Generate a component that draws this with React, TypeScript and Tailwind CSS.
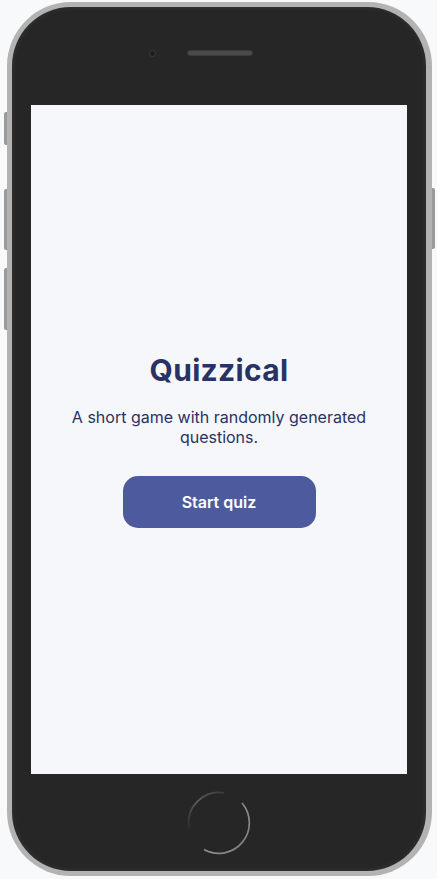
import React from "react";

export default function App() {
  return (
    <div className="w-[437px] h-[879px] bg-[#f8f9fa] overflow-hidden pt-[2px] pl-[7px]">
      <div className="relative w-[425px] h-[874px] rounded-[64px] bg-[#b3b3b3] p-[5px] pr-[6px]">
        {/* side buttons */}
        <div className="absolute left-[-3px] top-[110px] w-[3px] h-[33px] rounded-l-[2px] bg-[#9a9a9a]" />
        <div className="absolute left-[-3px] top-[187px] w-[3px] h-[61px] rounded-l-[2px] bg-[#9a9a9a]" />
        <div className="absolute left-[-3px] top-[266px] w-[3px] h-[62px] rounded-l-[2px] bg-[#9a9a9a]" />
        <div className="absolute right-[-3px] top-[186px] w-[3px] h-[61px] rounded-r-[2px] bg-[#9a9a9a]" />
        <div className="w-full h-full rounded-[59px] bg-[#262626] flex flex-col shadow-[inset_0_0_6px_rgba(255,255,255,0.08)]">
          <div className="h-[98px] flex items-center justify-center gap-[31px] pb-[6px]">
            <div className="w-[7px] h-[7px] rounded-full bg-[#1c1c24] border border-[#3c3c46] ml-[-36px]" />
            <div className="w-[66px] h-[6px] rounded-full bg-[#4a4a4a] border border-[#3a3a3a]" />
          </div>
          <div className="mx-[19px] h-[669px] bg-[#f5f7fb] flex flex-col items-center justify-center font-['Inter',sans-serif]">
            <h1 className="text-[30px] leading-[38px] font-bold text-[#293264] tracking-[0.3px] mt-[2px]">
              Quizzical
            </h1>
            <p className="mt-[18px] text-[16px] leading-[20px] text-[#293264] text-center w-[320px]">
              A short game with randomly generated questions.
            </p>
            <button className="mt-[29px] mb-[2px] w-[193px] h-[52px] rounded-[15px] bg-[#4d5b9e] text-white text-[16px] font-semibold">
              Start quiz
            </button>
          </div>
          <div className="flex-1 flex items-center justify-center">
            <svg width="70" height="70" viewBox="0 0 70 70">
              <defs>
                <linearGradient id="dim" x1="0" y1="1" x2="1" y2="0">
                  <stop offset="0" stopColor="#2e2e2e" />
                  <stop offset="0.5" stopColor="#5e5e5e" />
                  <stop offset="1" stopColor="#3a3a3a" />
                </linearGradient>
                <linearGradient id="bright" x1="0" y1="0" x2="1" y2="1">
                  <stop offset="0" stopColor="#3a3a3a" />
                  <stop offset="0.5" stopColor="#8e8e8e" />
                  <stop offset="1" stopColor="#7a7a7a" />
                </linearGradient>
              </defs>
              <path d="M 5 40 A 30.5 30.5 0 0 1 40 4.9" fill="none" stroke="url(#dim)" strokeWidth="1.7" />
              <path d="M 58 15 A 30.5 30.5 0 0 1 20 61.5" fill="none" stroke="url(#bright)" strokeWidth="1.7" />
            </svg>
          </div>
        </div>
      </div>
    </div>
  );
}
